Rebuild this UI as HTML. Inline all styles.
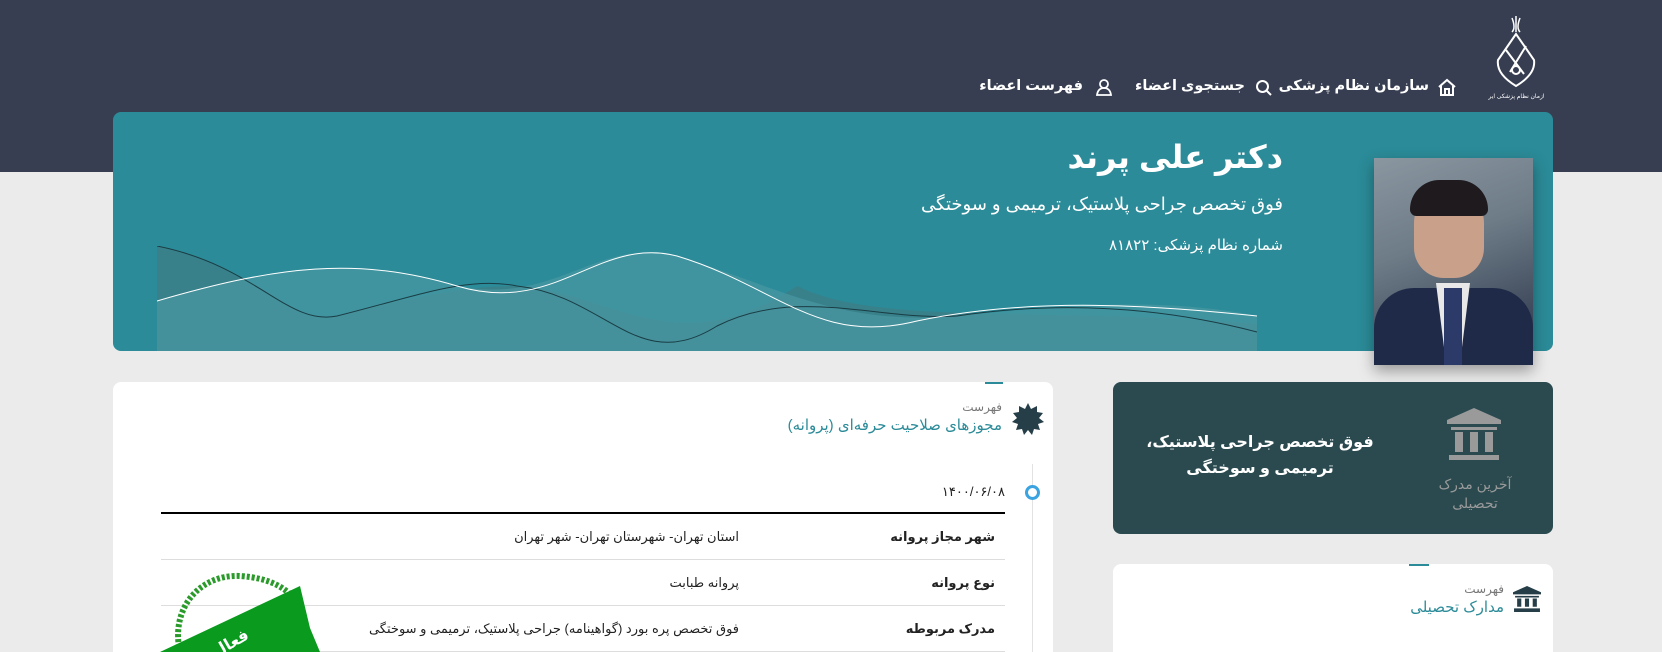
<!DOCTYPE html>
<html lang="fa" dir="rtl"><head><meta charset="utf-8">
<style>
*{margin:0;padding:0;box-sizing:border-box}
html{width:1662px;height:652px;overflow:hidden}
body{width:1662px;height:652px;overflow:hidden;background:#ebebeb;font-family:"Liberation Sans","Noto Sans CJK SC","DejaVu Sans",sans-serif;position:relative}
.hdr{position:absolute;left:0;top:0;width:1662px;height:172px;background:#373e51}
.abs{position:absolute}
.nav{position:absolute;top:78px;color:#fff;font-size:14.5px;font-weight:bold;white-space:nowrap}
.banner{position:absolute;left:113px;top:112px;width:1440px;height:239px;background:#2b8b98;border-radius:8px;overflow:hidden}
.photo{position:absolute;left:1374px;top:158px;width:159px;height:207px;background:linear-gradient(160deg,#8a96a0 0%,#6e7c88 40%,#4a5666 70%,#27304a 100%);box-shadow:0 6px 14px rgba(0,0,0,.35);overflow:hidden}
.card{position:absolute;background:#fff;border-radius:8px}
.row{position:absolute;left:161px;width:844px;border-bottom:1px solid #ddd;height:46px;font-size:13px;color:#222}
.row .l{position:absolute;right:10px;top:15px;font-weight:bold}
.row .v{position:absolute;right:266px;top:15px}
</style></head><body>
<div class="hdr"></div>
<svg class="abs" style="left:1488px;top:12px" width="56" height="90" viewBox="0 0 56 90">
<g fill="none" stroke="#fff" stroke-width="2">
<path d="M28 22 L10 48 Q8 62 28 74 Q48 62 46 48 Z"/><path d="M18 38 L36 62 M38 34 L22 60"/><circle cx="28" cy="58" r="4"/>
</g>
<path d="M24 6 q4 10 0 14 M32 6 q-4 10 0 14 M28 4 v16" stroke="#fff" stroke-width="1.5" fill="none"/>
<text x="28" y="86" font-size="6" fill="#fff" text-anchor="middle">سازمان نظام پزشکی ایران</text>
</svg>
<div class="nav" style="right:233px">سازمان نظام پزشکی</div>
<svg class="abs" style="left:1437px;top:78px" width="20" height="18" viewBox="0 0 20 18"><path d="M2 9 L10 2 L18 9 M4 8 V17 H16 V8 M8 17 V11 H12 V17" fill="none" stroke="#fff" stroke-width="2"/></svg>
<div class="nav" style="right:417px">جستجوی اعضاء</div>
<svg class="abs" style="left:1255px;top:79px" width="18" height="18" viewBox="0 0 18 18"><circle cx="7.5" cy="7.5" r="5.5" fill="none" stroke="#fff" stroke-width="2"/><path d="M12 12 L16 16" stroke="#fff" stroke-width="2"/></svg>
<div class="nav" style="right:579px">فهرست اعضاء</div>
<svg class="abs" style="left:1095px;top:78px" width="18" height="18" viewBox="0 0 18 18"><circle cx="9" cy="6" r="4" fill="none" stroke="#fff" stroke-width="1.8"/><path d="M2 17 Q3 10 9 10 Q15 10 16 17 Z" fill="none" stroke="#fff" stroke-width="1.8"/></svg>

<div class="banner">
<svg class="abs" style="left:44px;top:134px" width="1100" height="105" viewBox="0 0 1100 105">
<path d="M0 0 C100 20 130 80 180 70 C260 50 310 40 360 40 C450 45 520 120 640 40 C720 80 880 60 1100 78 V105 H0 Z" fill="#3a7f88" opacity=".9"/>
<path d="M0 55 C120 20 200 10 300 40 C400 60 440 -10 520 10 C620 40 680 80 800 70 C900 60 1000 50 1100 70 V105 H0Z" fill="#4a98a2" opacity=".7"/>
<path d="M0 0 C100 20 130 80 180 70 C260 50 310 30 360 40 C450 50 480 130 560 80 C640 40 720 75 800 70 C900 55 1000 60 1100 86" fill="none" stroke="#1a3c44" stroke-width="1"/>
<path d="M0 55 C120 20 200 10 300 40 C400 70 440 -10 520 10 C620 40 660 100 760 75 C880 50 1000 60 1100 70" fill="none" stroke="#fff" stroke-width="1"/>
</svg>
<div class="abs" style="right:270px;top:26px;color:#fff;font-size:32px;font-weight:bold">دکتر علی پرند</div>
<div class="abs" style="right:270px;top:82px;color:#fff;font-size:18px">فوق تخصص جراحی پلاستیک، ترمیمی و سوختگی</div>
<div class="abs" style="right:270px;top:124px;color:#fff;font-size:15px">شماره نظام پزشکی: ۸۱۸۲۲</div>
</div>
<div class="photo">
<div class="abs" style="left:40px;top:30px;width:70px;height:90px;border-radius:35px 35px 30px 30px;background:#c9a08a"></div>
<div class="abs" style="left:36px;top:22px;width:78px;height:36px;border-radius:36px 36px 8px 8px;background:#1e1a1e"></div>
<div class="abs" style="left:0;top:130px;width:159px;height:77px;background:#1f2a48;border-radius:40px 40px 0 0"></div>
<div class="abs" style="left:62px;top:125px;width:34px;height:82px;background:#e8e8e8;clip-path:polygon(0 0,100% 0,70% 100%,30% 100%)"></div>
<div class="abs" style="left:70px;top:130px;width:18px;height:77px;background:#2c3a6a"></div>
</div>

<div class="card" style="left:113px;top:382px;width:940px;height:270px;border-radius:8px 8px 0 0">
<div class="abs" style="right:50px;top:0;width:18px;height:2px;background:#2b8b98"></div>
<svg class="abs" style="right:8px;top:20px" width="34" height="34" viewBox="0 0 34 34"><polygon points="17,1 20,7 26,4 26,10 32,11 28,16 33,20 27,22 29,28 23,27 21,33 17,28 13,33 11,27 5,28 7,22 1,20 6,16 2,11 8,10 8,4 14,7" fill="#253e47"/></svg>
<div class="abs" style="right:51px;top:18px;font-size:12px;color:#777">فهرست</div>
<div class="abs" style="right:51px;top:34px;font-size:15px;color:#2b8b98">مجوزهای صلاحیت حرفه‌ای (پروانه)</div>
<div class="abs" style="right:20px;top:82px;width:1px;height:188px;background:#e2e2e2"></div>
<div class="abs" style="right:13px;top:103px;width:15px;height:15px;border-radius:50%;border:3px solid #3ba3e0;background:#fff"></div>
<div class="abs" style="right:48px;top:102px;font-size:13px;color:#222">۱۴۰۰/۰۶/۰۸</div>
</div>
<div class="abs" style="left:161px;top:512px;width:844px;height:2px;background:#000"></div>
<div class="row" style="top:514px"><span class="l">شهر مجاز پروانه</span><span class="v">استان تهران- شهرستان تهران- شهر تهران</span></div>
<div class="row" style="top:560px"><span class="l">نوع پروانه</span><span class="v">پروانه طبابت</span></div>
<div class="row" style="top:606px"><span class="l">مدرک مربوطه</span><span class="v">فوق تخصص پره بورد (گواهینامه) جراحی پلاستیک، ترمیمی و سوختگی</span></div>
<svg class="abs" style="left:160px;top:568px" width="160" height="84" viewBox="0 0 160 84">
<path d="M20 84 C10 40 40 6 80 8 C110 10 130 20 140 40" fill="none" stroke="#2a9a2a" stroke-width="6" stroke-dasharray="3 2"/>
<path d="M0 84 L140 18 L150 60 L160 84 Z" fill="#0a9a1e"/>
<text x="90" y="70" font-size="16" font-weight="bold" fill="#fff" transform="rotate(-30 90 70)">فعال</text>
</svg>

<div class="abs" style="left:1113px;top:382px;width:440px;height:152px;background:#2a4a4f;border-radius:8px"></div>
<svg class="abs" style="left:1447px;top:408px" width="54" height="54" viewBox="0 0 54 54"><path d="M27 0 L54 12 V16 H0 V12 Z M4 19 H50 V22 H4 Z M8 24 H16 V44 H8 Z M23 24 H31 V44 H23 Z M38 24 H46 V44 H38 Z M2 47 H52 V52 H2 Z" fill="#9a9a9a"/></svg>
<div class="abs" style="left:1425px;top:475px;width:100px;text-align:center;color:#9a9a9a;font-size:14px;line-height:19px">آخرین مدرک<br>تحصیلی</div>
<div class="abs" style="left:1140px;top:430px;width:240px;text-align:center;color:#fff;font-size:16px;font-weight:bold;line-height:26px">فوق تخصص جراحی پلاستیک،<br>ترمیمی و سوختگی</div>

<div class="card" style="left:1113px;top:564px;width:440px;height:88px;border-radius:8px 8px 0 0">
<div class="abs" style="right:124px;top:0;width:20px;height:2px;background:#2b8b98"></div>
<svg class="abs" style="right:12px;top:22px" width="28" height="26" viewBox="0 0 54 50"><path d="M27 0 L54 12 V16 H0 V12 Z M4 19 H50 V22 H4 Z M8 24 H16 V40 H8 Z M23 24 H31 V40 H23 Z M38 24 H46 V40 H38 Z M2 43 H52 V50 H2 Z" fill="#253e47"/></svg>
<div class="abs" style="right:49px;top:18px;font-size:12px;color:#777">فهرست</div>
<div class="abs" style="right:49px;top:34px;font-size:15px;color:#2b8b98">مدارک تحصیلی</div>
</div>
</body></html>
